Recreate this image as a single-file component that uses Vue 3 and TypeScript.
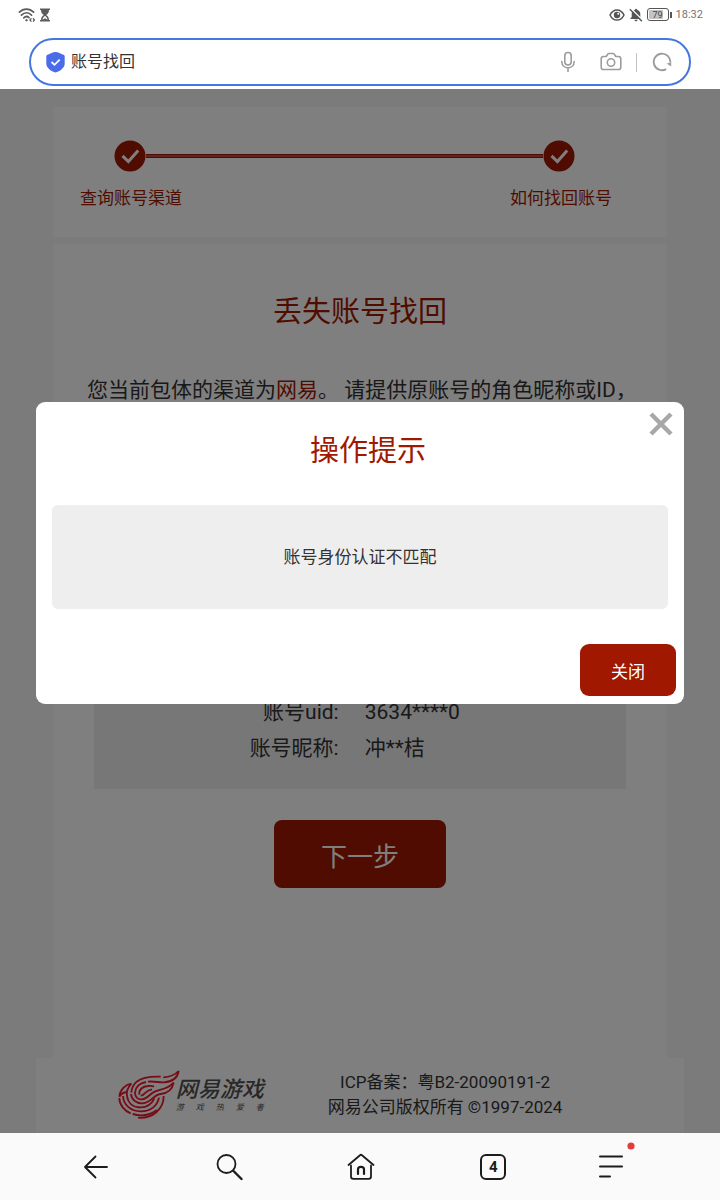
<script setup lang="ts">
import { ref } from 'vue'

interface AccountRow {
  label: string
  value: string
}

const pageTitle = ref<string>('账号找回')
const dialogOpen = ref<boolean>(true)
const steps: string[] = ['查询账号渠道', '如何找回账号']
const account: AccountRow[] = [
  { label: '账号uid:', value: '3634****0' },
  { label: '账号昵称:', value: '冲**桔' },
]
const slogan: string[] = ['游', '戏', '热', '爱', '者']
const tabCount = 4
</script>

<template>
  <div class="screen">
    <header class="top">
      <div class="status">
        <div class="status-group">
          <svg width="18" height="16" viewBox="0 0 18 16" fill="none" stroke="#5c5c5c" stroke-width="1.7" stroke-linecap="round">
            <path d="M1.4 5.2C5.4 1 11.6 1 15.6 5.2" />
            <path d="M3.4 8.2C6.6 4.9 10.6 4.9 13.6 8.2" />
            <path d="M5.8 10.8C7.4 9.3 9.6 9.3 11 10.6" />
            <circle cx="8.4" cy="13.2" r=".7" fill="#5c5c5c" stroke-width="1" />
            <path d="M13 11.6l-1 1.4 1 1.2M15.4 11.6l1 1.4-1 1.2" stroke-width="1.3" />
          </svg>
          <svg width="12" height="16" viewBox="0 0 12 16" fill="#5c5c5c">
            <path d="M1 1.5h10v1.6h-1C10 6 8.500 7.200 7.200 8 8.500 8.800 10 10 10 12.900h1v1.600H1v-1.600h1C2 10 3.500 8.800 4.800 8 3.500 7.200 2 6 2 3.100H1z" />
            <path d="M3.500 12.700C3.600 10.800 4.800 9.600 6 8.900c1.200.7 2.400 1.900 2.500 3.800L6 11.200z" fill="#fff" />
          </svg>
        </div>
        <div class="status-group right">
          <svg width="16" height="14" viewBox="0 0 16 14" fill="none" stroke="#555" stroke-width="1.500">
            <path d="M1 7C4.300 .2 11.700 .2 15 7 11.700 13.800 4.300 13.800 1 7z" />
            <circle cx="8" cy="7" r="3.200" fill="#555" stroke="none" />
            <circle cx="9.200" cy="5.800" r="1" fill="#fff" stroke="none" />
          </svg>
          <svg width="14" height="14" viewBox="0 0 14 14">
            <path d="M6 1.800a1 1 0 0 1 2 0c2.300.6 3.300 2.300 3.300 4.300v3L13 11H1l1.700-1.900v-3C2.700 4.100 3.700 2.400 6 1.800zM5.500 11.700h3a1.500 1.500 0 0 1-3 0z" fill="#555" />
            <path d="M1.800.4L14 12.400" stroke="#fff" stroke-width="1.400" />
            <path d="M.8 1.200L12.900 13.200" stroke="#555" stroke-width="1.400" />
          </svg>
          <span class="battery"><span class="cell">79</span><i class="tip"></i></span>
          <span class="clock">18:32</span>
        </div>
      </div>
      <div class="address">
        <svg width="19" height="21" viewBox="0 0 19 21">
          <path d="M9.500 0C11 0 15.500 1.800 17.500 2.800c.8.4 1.200.9 1.200 1.800v7c0 4.600-4.900 8-9.200 9C5.200 19.600 .3 16.200 .3 11.600v-7c0-.9.400-1.400 1.200-1.800C3.500 1.800 8 0 9.500 0z" fill="#4a6ce8" />
          <path d="M5.500 10l3 2.800 5.200-5.200" fill="none" stroke="#fff" stroke-width="1.800" />
        </svg>
        <input v-model="pageTitle" class="url" type="text" aria-label="网址" />
        <button class="icon" type="button" aria-label="语音">
          <svg width="16" height="22" viewBox="0 0 16 22" fill="none" stroke="#9c9c9c" stroke-width="1.600" stroke-linecap="round">
            <rect x="4.800" y="1.500" width="6.400" height="12.500" rx="3.200" />
            <path d="M1.800 10.500c.2 8.500 12.200 8.500 12.400 0M8 17v3.500" />
          </svg>
        </button>
        <button class="icon camera" type="button" aria-label="拍照">
          <svg width="22" height="20" viewBox="0 0 22 20" fill="none" stroke="#9c9c9c" stroke-width="1.600" stroke-linejoin="round">
            <path d="M3.500 4.500h2.700l1.500-2.300c.3-.5.600-.7 1.200-.7h4.200c.6 0 .9.200 1.200.7l1.500 2.300h2.700c1.400 0 2.300.9 2.300 2.300v8.400c0 1.400-.9 2.300-2.300 2.300h-15c-1.400 0-2.300-.9-2.300-2.300V6.800c0-1.400.9-2.300 2.300-2.300z" />
            <circle cx="11" cy="10.500" r="3.700" />
          </svg>
        </button>
        <i class="divider"></i>
        <button class="icon" type="button" aria-label="刷新">
          <svg width="20" height="20" viewBox="0 0 20 20" fill="none" stroke="#9c9c9c" stroke-width="1.900">
            <path d="M14.200 17.100A8.300 8.300 0 1 1 18.300 10.500" />
            <path d="M14.600 11.600l4.600-1.200v4.200z" fill="#9c9c9c" stroke="none" />
          </svg>
        </button>
      </div>
    </header>

    <main class="page">
      <section class="card progress">
        <div class="track">
          <svg class="dot" width="32" height="32" viewBox="0 0 32 32">
            <circle cx="16" cy="16" r="15.500" fill="#a01800" />
            <path d="M8.500 15.800l5.900 5.700L24.200 10.500" fill="none" stroke="#fff" stroke-width="3" />
          </svg>
          <i class="line"></i>
          <svg class="dot" width="32" height="32" viewBox="0 0 32 32">
            <circle cx="16" cy="16" r="15.500" fill="#a01800" />
            <path d="M8.500 15.800l5.900 5.700L24.200 10.500" fill="none" stroke="#fff" stroke-width="3" />
          </svg>
        </div>
        <div class="labels">
          <span v-for="step in steps" :key="step">{{ step }}</span>
        </div>
      </section>

      <section class="card recover">
        <h1 class="title">丢失账号找回</h1>
        <p class="hint">您当前包体的渠道为<em>网易</em>。 请提供原账号的角色昵称或ID，</p>
        <dl class="account">
          <template v-for="row in account" :key="row.label">
            <dt>{{ row.label }}</dt>
            <dd>{{ row.value }}</dd>
          </template>
        </dl>
        <button class="next" type="button">下一步</button>
      </section>

      <footer class="legal">
        <div class="logo">
          <svg width="62" height="50" viewBox="264 84 186 150" fill="none" stroke="#f0182c" stroke-width="5.500">
            <path d="M447 86C444 106 434 120 410 126C396 129 380 127 366 130C350 133 338 140 332 152C350 134 374 138 392 136C412 134 424 130 434 120C438 114 445 100 447 86z" fill="none" stroke="none" />
            <path d="M446 87C438 96 428 104 400 106" />
            <path d="M446 87C443 106 430 119 402 121C388 122 372 117 354 119" />
            <path d="M392 104C362 103 336 106 320 119C310 128 305 138 304 152" />
            <path d="M348 120C328 123 316 136 315 152C315 166 324 173 336 172C352 171 358 156 374 149C390 142 414 142 431 122" />
            <path d="M431 122C427 142 412 154 392 156C370 158 364 182 338 184C318 185 304 172 303 156" />
            <path d="M328 158C326 142 338 133 354 132C362 131 368 132 372 134" />
            <path d="M332 161C344 162 344 145 366 142" />
            <path d="M304 125C286 128 270 142 268 164C274 155 282 151 290 150" />
            <path d="M304 125C294 136 288 148 291 162C294 184 310 196 332 196C354 196 366 184 373 169" />
            <path d="M279 162C280 188 302 208 332 208C362 208 382 192 387 167" />
            <path d="M268 168C268 188 282 206 302 214" />
            <path d="M308 216C334 224 362 220 380 204" />
            <path d="M401 162C401 202 368 230 324 227" />
          </svg>
          <div class="brand">
            <strong>网易游戏</strong>
            <div class="slogan"><span v-for="ch in slogan" :key="ch">{{ ch }}</span></div>
          </div>
        </div>
        <p class="copyright">ICP备案：粤B2-20090191-2<br />网易公司版权所有 ©1997-2024</p>
      </footer>

      <div v-if="dialogOpen" class="mask">
        <div class="dialog" role="dialog" aria-modal="true" aria-labelledby="dialog-title">
          <button class="dismiss" type="button" aria-label="关闭提示" @click="dialogOpen = false">
            <svg width="24" height="24" viewBox="0 0 24 24" fill="none" stroke="#a8a8a8" stroke-width="4.500">
              <path d="M2 2l20 20M22 2L2 22" />
            </svg>
          </button>
          <h2 id="dialog-title" class="title">操作提示</h2>
          <p class="message">账号身份认证不匹配</p>
          <button class="close" type="button" @click="dialogOpen = false">关闭</button>
        </div>
      </div>
    </main>

    <nav class="bar">
      <button type="button" aria-label="返回">
        <svg width="26" height="26" viewBox="0 0 26 26" fill="none" stroke="#1c1c1c" stroke-width="1.800" stroke-linecap="round" stroke-linejoin="round">
          <path d="M12.500 2.500L2 13l10.500 10.500M2 13h22" />
        </svg>
      </button>
      <button type="button" aria-label="搜索">
        <svg width="28" height="28" viewBox="0 0 28 28" fill="none" stroke="#1c1c1c" stroke-linecap="round">
          <circle cx="11.500" cy="11" r="9" stroke-width="1.800" />
          <path d="M18.500 18l8 8" stroke-width="2.400" />
        </svg>
      </button>
      <button type="button" aria-label="主页">
        <svg width="28" height="28" viewBox="0 0 28 28" fill="none" stroke="#1c1c1c" stroke-width="1.800" stroke-linecap="round" stroke-linejoin="round">
          <path d="M1.500 12L13 2.200c.7-.6 1.300-.6 2 0L26.500 12" />
          <path d="M4 12.500V23.500c0 1.500.8 2.300 2.300 2.300h15.400c1.500 0 2.300-.8 2.300-2.300V12.500" />
          <path d="M11 21v-4.500c0-3.400 6-3.400 6 0V21" stroke-width="2.200" />
        </svg>
      </button>
      <button type="button" aria-label="标签页"><span class="tabs">{{ tabCount }}</span></button>
      <button type="button" aria-label="菜单">
        <svg width="54" height="50" viewBox="0 0 54 50" stroke="#1c1c1c" stroke-width="2" stroke-linecap="round">
          <path d="M1 14.500h22M1 24.500h22M1 34.500h10" />
          <circle cx="32" cy="4" r="3.600" fill="#e23c3c" stroke="none" />
        </svg>
      </button>
    </nav>
  </div>
</template>

<style>
body {
  margin: 0;
}
</style>

<style scoped>
.screen {
  display: flex;
  flex-direction: column;
  min-height: 100vh;
  background: #fff;
  color: #333;
  font-family: Roboto, "Noto Sans CJK SC", sans-serif;
}
button {
  padding: 0;
  border: 0;
  background: none;
  font-family: inherit;
  cursor: pointer;
}
svg {
  display: block;
  flex: none;
}
h1,
h2,
p,
dl,
dd {
  margin: 0;
  font-weight: 400;
}
.top {
  padding-bottom: 3px;
}
.status {
  display: flex;
  justify-content: space-between;
  align-items: center;
  height: 29px;
  padding: 0 17px 0 18px;
  margin-bottom: 9px;
}
.status-group {
  display: flex;
  align-items: center;
  gap: 3px;
}
.status-group.right {
  gap: 4px;
}
.battery {
  display: flex;
  align-items: center;
  gap: 1px;
}
.cell {
  box-sizing: border-box;
  width: 22px;
  height: 13px;
  border: 1px solid #555;
  border-radius: 3px;
  background: linear-gradient(90deg, #c4c4c4 78%, #fff 78%) content-box;
  padding: 1px;
  color: #444;
  font-size: 9px;
  line-height: 10px;
  text-align: center;
}
.tip {
  width: 2px;
  height: 6px;
  background: #555;
}
.clock {
  color: #757575;
  font-size: 11px;
  line-height: 16px;
}
.address {
  display: flex;
  align-items: center;
  box-sizing: border-box;
  height: 48px;
  margin: 0 29px;
  padding: 0 17px 0 15px;
  border: 2px solid #4478de;
  border-radius: 24px;
}
.url {
  flex: 1;
  min-width: 0;
  margin-left: 6px;
  padding: 0;
  border: 0;
  outline: 0;
  background: none;
  color: #333;
  font-family: inherit;
  font-size: 16px;
  line-height: 24px;
}
.camera {
  margin: 0 14px 0 24px;
}
.divider {
  width: 1px;
  height: 19px;
  margin-right: 15px;
  background: #c4c4c4;
}
.page {
  position: relative;
  display: flex;
  flex: 1;
  flex-direction: column;
  padding-top: 18px;
  background: #f6f6f6;
}
.card {
  margin: 0 53px;
  background: #fff;
}
.progress {
  margin-bottom: 7px;
  padding: 33px 0 27px;
}
.track {
  display: flex;
  align-items: center;
  padding: 0 92px 0 61px;
}
.line {
  box-sizing: border-box;
  flex: 1;
  height: 4px;
  border: solid #a01800;
  border-width: 1px 0;
  background: #c44840;
}
.labels {
  display: flex;
  justify-content: space-between;
  margin-top: 14px;
  padding: 0 55px 0 27px;
  color: #a01800;
  font-size: 17px;
  line-height: 24px;
}
.recover {
  display: flex;
  flex: 1;
  flex-direction: column;
  padding: 48px 0 40px;
}
.title {
  color: #a01800;
  font-size: 29px;
  line-height: 40px;
  text-align: center;
}
.hint {
  margin-top: 42px;
  padding: 0 34px;
  font-size: 21px;
  line-height: 32px;
  white-space: nowrap;
}
.hint em {
  color: #a01800;
  font-style: normal;
}
.account {
  display: grid;
  grid-template-columns: 46% 1fr;
  column-gap: 26px;
  margin: 264px 41px 0;
  padding: 24px 0 23px;
  background: #eee;
  font-size: 21px;
  line-height: 36px;
}
.account dt {
  text-align: right;
}
.next {
  width: 172px;
  height: 68px;
  margin: 31px auto 0;
  border-radius: 8px;
  background: #a01800;
  color: #fff;
  font-size: 26px;
}
.legal {
  display: flex;
  align-items: center;
  justify-content: center;
  gap: 64px;
  margin: 0 36px;
  padding: 12px 40px 13px 0;
  background: #fff;
}
.logo {
  display: flex;
  align-items: center;
}
.brand {
  width: 88px;
  margin-left: -4px;
  color: #505050;
  font-style: italic;
}
.brand strong {
  display: block;
  font-size: 22px;
  font-weight: 500;
  line-height: 26px;
}
.slogan {
  display: flex;
  justify-content: space-between;
  font-size: 8px;
  line-height: 10px;
}
.copyright {
  font-size: 17px;
  line-height: 25px;
  text-align: center;
}
.mask {
  position: absolute;
  inset: 0;
  padding: 313px 36px 0;
  background: rgba(0, 0, 0, 0.5);
}
.dialog {
  position: relative;
  display: flex;
  flex-direction: column;
  padding: 29px 8px 8px;
  border-radius: 9px;
  background: #fff;
}
.dialog .title {
  padding-left: 16px;
}
.dismiss {
  position: absolute;
  top: 10px;
  right: 11px;
}
.message {
  margin: 34px 8px 35px;
  padding: 40px 16px;
  border-radius: 6px;
  background: #eee;
  font-size: 17px;
  line-height: 24px;
  text-align: center;
}
.close {
  align-self: flex-end;
  width: 96px;
  height: 52px;
  border-radius: 9px;
  background: #a01800;
  color: #fff;
  font-size: 17px;
}
.bar {
  display: flex;
  height: 67px;
  padding: 0 28px 0 30px;
  background: #fafafa;
}
.bar button {
  display: flex;
  flex: 1;
  align-items: center;
  justify-content: center;
}
.tabs {
  box-sizing: border-box;
  width: 26px;
  height: 26px;
  border: 2px solid #1c1c1c;
  border-radius: 6px;
  color: #1c1c1c;
  font-size: 15px;
  font-weight: 700;
  line-height: 22px;
}
</style>
